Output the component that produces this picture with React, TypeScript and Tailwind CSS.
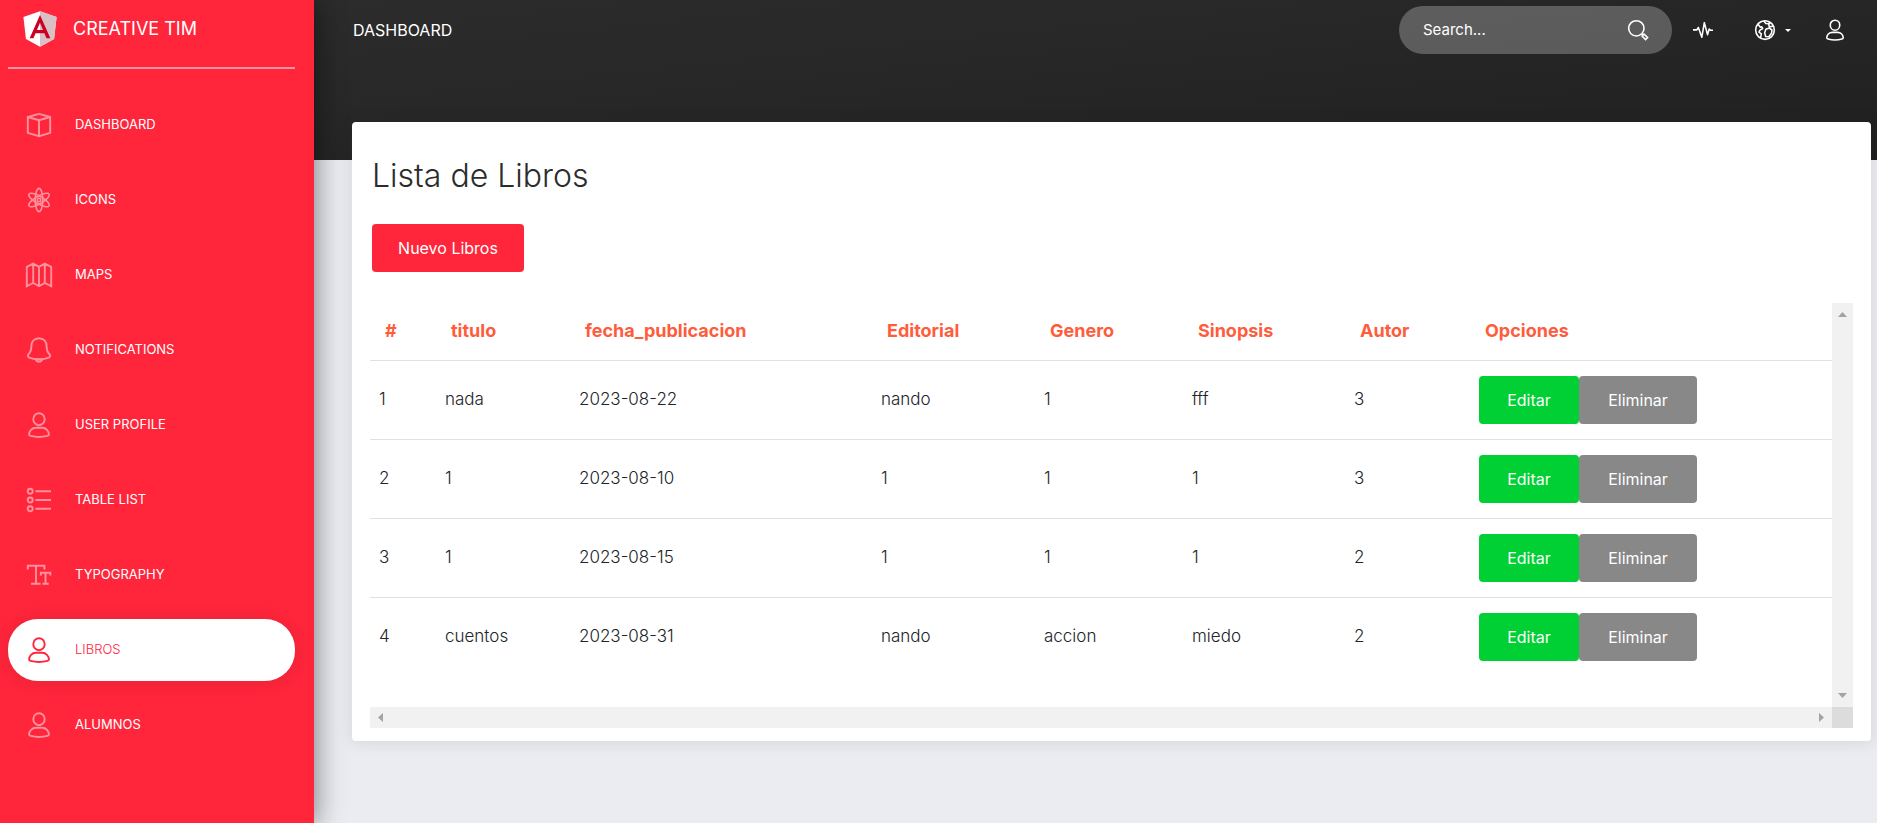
import React from "react";

type IconName =
  | "box"
  | "atom"
  | "map"
  | "bell"
  | "user"
  | "bullets"
  | "type"
  | "search"
  | "pulse"
  | "globe";

const shapes: Record<IconName, React.ReactNode> = {
  box: (
    <path d="M12 .9 23.2 4v15.8L12 23.2.8 19.8V4ZM.8 4 12 7.2 23.2 4M12 7.2v16" />
  ),
  atom: (
    <g strokeWidth="1.6">
      <ellipse cx="12" cy="12" rx="3.8" ry="11.6" />
      <ellipse cx="12" cy="12" rx="3.8" ry="11.6" transform="rotate(60 12 12)" />
      <ellipse cx="12" cy="12" rx="3.8" ry="11.6" transform="rotate(120 12 12)" />
      <circle cx="12" cy="12" r="1.7" />
    </g>
  ),
  map: (
    <path d="M-.2 3.8 6.2.6 12 3.8 17.8.6l6.4 3.2v19.4l-6.4-3.2-5.8 3.2L6.2 20l-6.4 3.2ZM6.2.6V20M12 3.8v19.4M17.8.6V20" />
  ),
  bell: (
    <path d="M12 .2c-4.600 0-7.600 3.300-7.600 7.800 0 5-1.200 6.600-2.800 8.200-1.200 1.200-1 2.700.7 3.400C4.800 20.700 8.200 21.200 12 21.200s7.200-.5 9.700-1.600c1.700-.7 1.900-2.200.7-3.400-1.600-1.600-2.800-3.200-2.800-8.200C19.600 3.500 16.600.2 12 .2ZM8.800 21.200c.3 1.800 1.500 2.600 3.200 2.600s2.900-.8 3.200-2.600" />
  ),
  user: (
    <>
      <ellipse cx="12" cy="6.200" rx="5.700" ry="6" />
      <path d="M9 14.800h6c4.200 0 6.800 3.200 6.900 6.600 0 .9-.5 1.300-1.500 1.500-5.300 1.300-11.500 1.300-16.800 0-1-.2-1.500-.6-1.500-1.500.1-3.400 2.700-6.600 6.900-6.600Z" />
    </>
  ),
  bullets: (
    <>
      <circle cx="3.200" cy="3.300" r="2.500" />
      <circle cx="3.200" cy="12" r="2.500" />
      <circle cx="3.200" cy="20.700" r="2.500" />
      <path d="M8.500 3.300H24M8.500 12H24M8.500 20.700H24" />
    </>
  ),
  type: (
    <>
      <path d="M.8 6.500V2.800h16.600v3.700M9 2.800v18M4 20.800h9.600" />
      <path d="M13.800 12.500V9.800h9.500v2.700M18.500 9.800v11M15.500 20.800h6.300" />
    </>
  ),
  search: (
    <>
      <circle cx="10" cy="10" r="9.200" />
      <path d="m16.600 16.600 1.600 1.600M16.800 19.200l2.400-2.400 4.300 4.300-2.400 2.400Z" />
    </>
  ),
  pulse: (
    <path
      strokeLinejoin="round"
      d="M0 11.800h4.600l1.800-2.800 4.200 11.600L13.600 3.200l3.800 14.400 2-6.800 1.400 1.400H24"
    />
  ),
  globe: (
    <>
      <circle cx="12" cy="12" r="11.200" />
      <path
        strokeLinejoin="round"
        d="M3.400 4.800 6.400 8.600 8.200 8.200 9.200 10.200 6 12.200 4.800 14.600 7.600 16.600 6.600 21.600M10.400 1 13 4.200l3.200.4 1 3.400 4.800-.4M17 2l1 3M13 11.200l4.200-1.600 3.200 2.400-.6 4-3.200 4.200-3.800-.4-1.200-4.400Z"
      />
    </>
  ),
};

function Icon({ name, className }: { name: IconName; className: string }) {
  return (
    <svg
      viewBox="0 0 24 24"
      fill="none"
      stroke="currentColor"
      strokeWidth="1.9"
      className={`shrink-0 overflow-visible ${className}`}
      aria-hidden="true"
    >
      {shapes[name]}
    </svg>
  );
}

function Logo() {
  return (
    <svg viewBox="31 29 188 202" className="h-9 w-[34px] shrink-0" aria-hidden="true">
      <path fill="#fff" d="M125 30 31.900 63.200l14.200 123.100L125 230l78.900-43.700 14.200-123.100Z" />
      <path fill="#d8c0c4" d="M125 30v200l78.900-43.700 14.200-123.100Z" />
      <path
        fill="#cc0022"
        fillRule="evenodd"
        d="M125 52.100 66.800 182.600h21.700l11.700-29.200h49.400l11.700 29.200H183ZM142 135.400h-34l17-40.900Z"
      />
    </svg>
  );
}

const links: { label: string; icon: IconName }[] = [
  { label: "DASHBOARD", icon: "box" },
  { label: "ICONS", icon: "atom" },
  { label: "MAPS", icon: "map" },
  { label: "NOTIFICATIONS", icon: "bell" },
  { label: "USER PROFILE", icon: "user" },
  { label: "TABLE LIST", icon: "bullets" },
  { label: "TYPOGRAPHY", icon: "type" },
  { label: "LIBROS", icon: "user" },
  { label: "ALUMNOS", icon: "user" },
];

const active = "LIBROS";

function Sidebar() {
  return (
    <aside className="relative z-10 w-[314px] shrink-0 bg-[#ff253b] pl-2 pr-[19px] text-white shadow-[0_2px_22px_0_rgba(0,0,0,0.2),0_2px_30px_0_rgba(0,0,0,0.35)]">
      <a href="#" className="flex h-[69px] items-center gap-4 border-b-2 border-white/50 pb-[9px] pl-[15px] text-lg">
        <Logo />
        CREATIVE TIM
      </a>
      <nav className="mt-[25px] flex flex-col gap-[13px]">
        {links.map(({ label, icon }) => {
          const on = label === active;
          return (
            <a
              key={label}
              href="#"
              aria-current={on ? "page" : undefined}
              className={`flex h-[62px] items-center gap-6 rounded-[30px] pl-[19px] text-[13px] ${
                on
                  ? "bg-white font-light text-[#ff253b] shadow-[0_1px_15px_1px_rgba(39,39,39,0.1)]"
                  : ""
              }`}
            >
              <Icon name={icon} className={on ? "size-6" : "size-6 opacity-50"} />
              {label}
            </a>
          );
        })}
      </nav>
    </aside>
  );
}

function Navbar() {
  return (
    <div className="flex h-[60px] items-center justify-between pl-[39px] pr-8 text-white">
      <a href="#" className="text-base">
        DASHBOARD
      </a>
      <div className="flex items-center">
        <div className="flex h-12 w-[273px] items-center rounded-[24px] bg-white/25 px-6">
          <input
            type="text"
            aria-label="Search"
            placeholder="Search..."
            className="min-w-0 flex-1 bg-transparent text-[15px] outline-none placeholder:text-white"
          />
          <Icon name="search" className="size-5" />
        </div>
        <button type="button" aria-label="Stats" className="ml-[21px]">
          <Icon name="pulse" className="size-5" />
        </button>
        <button type="button" aria-label="Language" className="ml-[42px] flex items-center gap-[10px]">
          <Icon name="globe" className="size-5" />
          <svg viewBox="0 0 6 3" className="h-[3px] w-[6px]" fill="currentColor" aria-hidden="true">
            <path d="M0 0h6L3 3Z" />
          </svg>
        </button>
        <button type="button" aria-label="Account" className="ml-[34px]">
          <Icon name="user" className="size-5" />
        </button>
      </div>
    </div>
  );
}

const headings = ["#", "titulo", "fecha_publicacion", "Editorial", "Genero", "Sinopsis", "Autor", "Opciones"];

const rows = [
  ["1", "nada", "2023-08-22", "nando", "1", "fff", "3"],
  ["2", "1", "2023-08-10", "1", "1", "1", "3"],
  ["3", "1", "2023-08-15", "1", "1", "1", "2"],
  ["4", "cuentos", "2023-08-31", "nando", "accion", "miedo", "2"],
];

function BookTable() {
  return (
    <table className="w-full table-fixed border-collapse text-left text-[#212529]">
      <colgroup>
        <col className="w-[66px]" />
        <col className="w-[134px]" />
        <col className="w-[302px]" />
        <col className="w-[163px]" />
        <col className="w-[148px]" />
        <col className="w-[162px]" />
        <col className="w-[125px]" />
        <col />
      </colgroup>
      <thead>
        <tr className="h-[57px] text-lg text-[#ff5c3c]">
          {headings.map((h) => (
            <th key={h} scope="col" className="pl-[15px] font-bold">
              {h}
            </th>
          ))}
        </tr>
      </thead>
      <tbody>
        {rows.map((row) => (
          <tr key={row[0]} className="h-[79px] border-t border-[#dee2e6] text-[17px] font-light">
            {row.map((cell, i) => (
              <td key={i} className="pl-[9px]">
                {cell}
              </td>
            ))}
            <td className="pl-[9px]">
              <div className="flex">
                <button type="button" className="h-12 w-[100px] rounded bg-[#00d033] text-base font-normal text-white">
                  Editar
                </button>
                <button type="button" className="h-12 w-[118px] rounded bg-[#888888] text-base font-normal text-white">
                  Eliminar
                </button>
              </div>
            </td>
          </tr>
        ))}
      </tbody>
    </table>
  );
}

function Arrow({ d }: { d: string }) {
  return (
    <svg viewBox="0 0 21 21" className="size-[21px]" fill="#a3a3a3" aria-hidden="true">
      <path d={d} />
    </svg>
  );
}

function ScrollFrame({ children }: { children: React.ReactNode }) {
  return (
    <div className="grid grid-cols-[minmax(0,1fr)_21px]">
      <div className="pb-[31px]">{children}</div>
      <div className="flex flex-col justify-between bg-[#f1f1f1]">
        <Arrow d="M6 14h9l-4.500-5Z" />
        <Arrow d="M6 7h9l-4.500 5Z" />
      </div>
      <div className="flex justify-between bg-[#f1f1f1]">
        <Arrow d="M13 6v9L8 10.500Z" />
        <Arrow d="M8 6v9l5-4.500Z" />
      </div>
      <div className="bg-[#dcdcdc]" />
    </div>
  );
}

export default function App() {
  return (
    <div className="flex min-h-screen bg-[#ebecf1] font-['Inter','Open_Sans',sans-serif]">
      <Sidebar />
      <div className="min-w-0 flex-1">
        <header className="h-40 bg-linear-to-br from-[#2c2c2c] to-[#202020]">
          <Navbar />
        </header>
        <main className="relative -mt-[38px] pb-20 pl-[38px] pr-[6px]">
          <section className="rounded bg-white px-[18px] pb-[13px] pt-[34px] shadow-[0_1px_15px_1px_rgba(39,39,39,0.1)]">
            <div className="pl-[2px]">
              <h1 className="text-[32px] font-light leading-[40px] text-[#2c2c2c]">Lista de Libros</h1>
              <button
                type="button"
                className="mt-7 h-12 w-[152px] rounded bg-[#ff253b] text-base text-white"
              >
                Nuevo Libros
              </button>
            </div>
            <div className="mt-[31px]">
              <ScrollFrame>
                <BookTable />
              </ScrollFrame>
            </div>
          </section>
        </main>
      </div>
    </div>
  );
}
